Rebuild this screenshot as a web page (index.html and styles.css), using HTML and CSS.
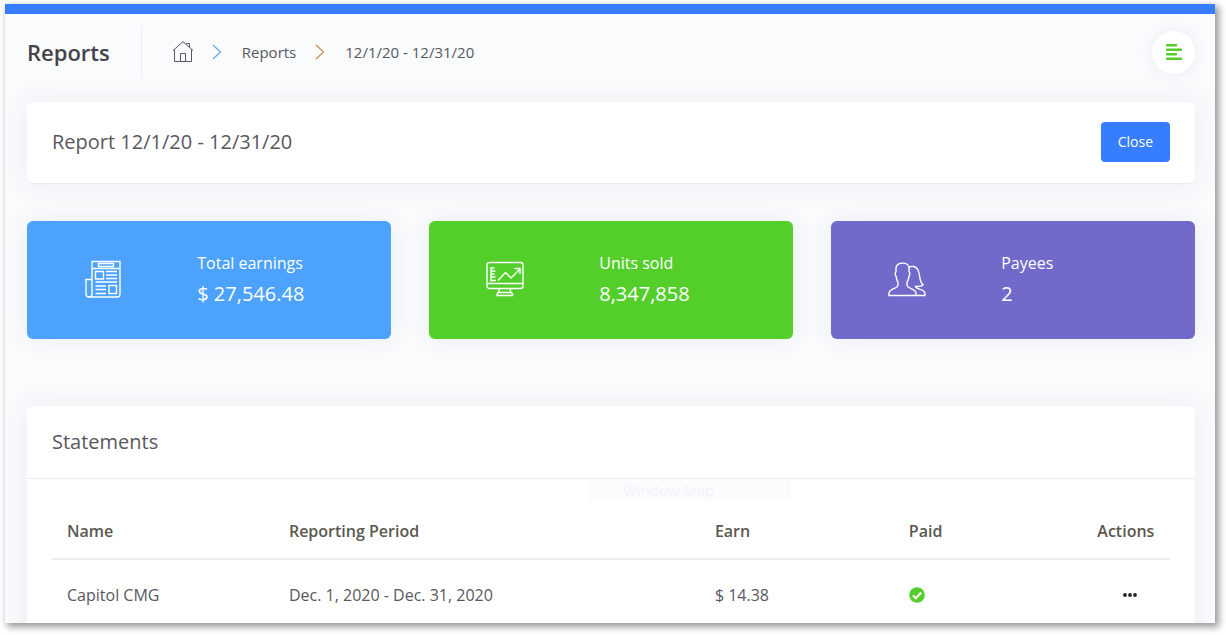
FILE: index.html
```html
<!DOCTYPE html>
<html lang="en">
<head>
<meta charset="utf-8">
<meta name="viewport" content="width=device-width, initial-scale=1">
<title>Reports</title>
<link rel="stylesheet" href="styles.css">
</head>
<body>
<div class="window">
  <header class="topbar">
    <h1 class="page-title">Reports</h1>
    <nav class="breadcrumb" aria-label="Breadcrumb">
      <a class="crumb-home" href="#" aria-label="Home">
        <svg width="22" height="22" viewBox="0 0 22 22" fill="none" stroke="currentColor"><path d="M1 9.500 11 .7 21 9.500M2.500 8.500V20.500H19.500V8.500M8.500 20.500V12.500H13.500V20.500M14.500 3.500V2.500H17.500V6.500"/></svg>
      </a>
      <svg class="chevron chevron-blue" width="10" height="16" viewBox="0 0 10 16" fill="none" stroke="currentColor" stroke-width="1.200"><path d="M1 1 8.500 8 1 15"/></svg>
      <a class="crumb" href="#">Reports</a>
      <svg class="chevron chevron-tan" width="10" height="16" viewBox="0 0 10 16" fill="none" stroke="currentColor" stroke-width="1.200"><path d="M1 1 8.500 8 1 15"/></svg>
      <a class="crumb" href="#">12/1/20 - 12/31/20</a>
    </nav>
    <button class="menu-button" type="button" aria-label="Menu">
      <svg width="16" height="16" viewBox="0 0 16 16" fill="none" stroke="currentColor" stroke-width="2.400" stroke-linecap="round"><path d="M1 1.200H10M1 5.700H15M1 10.200H10M1 14.700H15"/></svg>
    </button>
  </header>
  <main class="content">
    <section class="card report-head">
      <h2 class="card-title">Report 12/1/20 - 12/31/20</h2>
      <button class="close-button" type="button">Close</button>
    </section>
    <section class="stats">
      <article class="stat stat-blue">
        <svg class="stat-icon" width="38" height="38" viewBox="0 0 38 38" fill="none" stroke="currentColor" stroke-width="1.400"><path d="M8 19.500V1.500H36V34Q36 37 33 37H5Q2 37 2 34V19.500H8V34Q8 37 5 37M8 8.500H36M14.500 3.500H29.500V6.500H14.500ZM11.500 11.500H19.500V19H11.500ZM22 11.500H33M22 15H33M22 18.500H33M11.500 22H33M11.500 26H22M11.500 29.500H22M11.500 33.500H22M25 25.500H32.500V33.500H25Z"/></svg>
        <div><p class="stat-label">Total earnings</p><p class="stat-value">$ 27,546.48</p></div>
      </article>
      <article class="stat stat-green">
        <svg class="stat-icon" width="38" height="38" viewBox="0 0 38 38" fill="none" stroke="currentColor" stroke-width="1.400"><rect x="1" y="2.500" width="36" height="26" rx="2.500"/><path d="M1 23.500H37M13.500 28.500 12.500 32.500M24 28.500 25 32.500M11 35.500V34.500Q11 32.500 13.500 32.500H24Q26.500 32.500 26.500 34.500V35.500ZM5 7V21.500M5 8H8.500M5 11H9.500M5 14H8.500M5 17H9.500M5 20.500H10M12 20.500 19.500 12.500 25 18 34 9M28.500 8.500H34V14"/></svg>
        <div><p class="stat-label">Units sold</p><p class="stat-value">8,347,858</p></div>
      </article>
      <article class="stat stat-purple">
        <svg class="stat-icon" width="38" height="38" viewBox="0 0 38 38" fill="none" stroke="currentColor" stroke-width="1.400"><path d="M1 35.500V33C1 29 10 28.500 10 25V22C8.500 20.500 8.500 18 8 16C7 15 7 12.500 8 11.500V8C8 1.500 21 1.500 21 8V11.500C22 12.500 22 15 21 16C20.500 18 20.500 20.500 19 22V25C19 28.500 28 29 28 33V35.500ZM21 7.500C23 6 28 5.500 30 10C32.500 15 30.500 20 35 25C33 27 29 26.500 27.500 26.500C27.500 29.500 37 29 37 33.500V35.500H28"/></svg>
        <div><p class="stat-label">Payees</p><p class="stat-value">2</p></div>
      </article>
    </section>
    <section class="card statements">
      <h2 class="card-title statements-title">Statements</h2>
      <div class="snip-ghost">Window Snip</div>
      <div class="table-wrap">
        <table class="table">
          <colgroup><col class="col-name"><col class="col-period"><col class="col-earn"><col class="col-paid"><col class="col-actions"></colgroup>
          <thead>
            <tr><th>Name</th><th>Reporting Period</th><th>Earn</th><th>Paid</th><th class="actions">Actions</th></tr>
          </thead>
          <tbody>
            <tr>
              <td>Capitol CMG</td><td>Dec. 1, 2020 - Dec. 31, 2020</td><td>$ 14.38</td>
              <td><svg class="paid-icon" role="img" aria-label="Paid" width="16" height="16" viewBox="0 0 16 16"><circle cx="8" cy="8" r="7.800" fill="#53ce2b"/><path d="M4 8.500 6.800 11.200 12.200 5.500" fill="none" stroke="#fff" stroke-width="2.200"/></svg></td>
              <td class="actions"><button class="more-button" type="button" aria-label="More actions"><svg width="14" height="4" viewBox="0 0 14 4" fill="currentColor"><circle cx="2" cy="2" r="1.900"/><circle cx="7" cy="2" r="1.900"/><circle cx="12" cy="2" r="1.900"/></svg></button></td>
            </tr>
          </tbody>
        </table>
      </div>
    </section>
  </main>
</div>
</body>
</html>
```
FILE: styles.css
```css
* {
  box-sizing: border-box;
}

body {
  margin: 0;
  height: 100vh;
  padding: 4px 11px 12px 5px;
  background: #fff;
  color: #58585e;
  font-family: "Open Sans", "Noto Sans", sans-serif;
  font-size: 16px;
  line-height: 24px;
  overflow: hidden;
}

h1,
h2,
p {
  margin: 0;
}

a {
  color: inherit;
  text-decoration: none;
}

button {
  border: 0;
  padding: 0;
  font: inherit;
  cursor: pointer;
}

svg {
  display: block;
  flex: none;
}

.window {
  height: 100%;
  overflow: hidden;
  border-top: 10px solid #367eff;
  background: #fafbfd;
  box-shadow: 3px 3px 7px 1px rgba(0, 0, 0, 0.4);
}

.topbar {
  display: flex;
  align-items: center;
  padding: 13px 20px 25px 22px;
}

.page-title {
  padding-right: 31px;
  border-right: 1px solid #ebedf2;
  color: #434349;
  font-size: 22px;
  font-weight: 600;
  line-height: 50px;
}

.breadcrumb {
  display: flex;
  flex: 1;
  align-items: center;
  padding-left: 30px;
  font-size: 15px;
}

.crumb-home {
  margin-right: 18px;
}

.chevron {
  margin-right: 20px;
}

.crumb + .chevron {
  margin-left: 19px;
}

.chevron-blue {
  color: #5fa6d6;
}

.chevron-tan {
  color: #c98a4c;
}

.menu-button {
  display: grid;
  place-items: center;
  width: 43px;
  height: 43px;
  border-radius: 50%;
  background: #fff;
  color: #53ce2b;
  box-shadow: 0 0 16px rgba(82, 63, 105, 0.08);
}

.content {
  padding: 0 20px 0 22px;
}

.card {
  border-radius: 6px;
  background: #fff;
  box-shadow: 0 0 30px rgba(69, 65, 78, 0.08);
}

.card-title {
  font-size: 20px;
  font-weight: 400;
  line-height: 30px;
}

.report-head {
  display: flex;
  align-items: center;
  justify-content: space-between;
  padding: 20px 25px 21px;
  border-bottom: 1px solid #ebedf2;
}

.close-button {
  padding: 0 17px;
  border-radius: 4px;
  background: #367eff;
  color: #fff;
  font-size: 14px;
  line-height: 40px;
}

.stats {
  display: grid;
  grid-template-columns: repeat(3, 1fr);
  gap: 38px;
  padding: 37px 0 67px;
}

.stat {
  display: grid;
  grid-template-columns: 44% 1fr;
  align-items: center;
  padding: 27px 0 29px 18px;
  border-radius: 6px;
  color: #fff;
  box-shadow: 0 0 24px rgba(69, 65, 78, 0.08);
}

.stat-blue {
  background: #4ca2fd;
}

.stat-green {
  background: #53ce2b;
}

.stat-purple {
  background: #716aca;
}

.stat-icon {
  margin-left: 39px;
}

.stat-label {
  line-height: 30px;
}

.stat-value {
  font-size: 20px;
  line-height: 32px;
}

.statements {
  position: relative;
  min-height: 300px;
}

.statements-title {
  padding: 21px 25px;
  border-bottom: 1px solid #ebedf2;
}

.snip-ghost {
  position: absolute;
  top: 73px;
  left: 562px;
  width: 202px;
  padding-left: 34px;
  background: #fbfcfe;
  color: #f3f4f7;
  font-size: 15px;
  line-height: 22px;
}

.table-wrap {
  padding: 25px;
}

.table {
  width: 100%;
  table-layout: fixed;
  border-collapse: collapse;
}

.col-name {
  width: 19.85%;
}

.col-period {
  width: 38.1%;
}

.col-earn {
  width: 17.35%;
}

.col-paid {
  width: 16.8%;
}

.table th {
  padding: 15px;
  border-bottom: 2px solid #ebedf2;
  color: #5a5850;
  font-weight: 600;
  text-align: left;
}

.table td {
  padding: 23px 15px;
}

.table .actions {
  padding-right: 0;
  padding-left: 0;
  text-align: center;
}

.more-button {
  display: block;
  margin: 0 auto;
  padding: 10px 0 10px 9px;
  background: none;
  color: #212529;
}
```
